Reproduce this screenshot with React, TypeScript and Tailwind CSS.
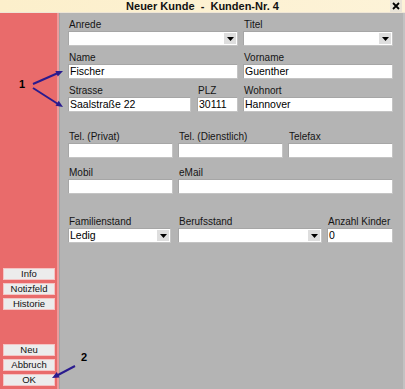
import type { ReactNode } from 'react'

type FieldProps = {
  label: string
  value?: string
  width: string
  select?: boolean
  className?: string
}

function Field({ label, value = '', width, select, className = '' }: FieldProps) {
  return (
    <div className={`${width} ${className} flex flex-col`}>
      <div className="h-[13px] pl-px text-[10px] leading-[13px] text-[#141414] whitespace-nowrap">{label}</div>
      <div className="flex h-[15px] items-stretch border border-[#c4c4c4] border-t-[#a6a6a6] border-l-[#a6a6a6] bg-white">
        <div className="flex-1 overflow-hidden px-px text-[10.5px] leading-[13px] text-black whitespace-nowrap">{value}</div>
        {select && (
          <div className="my-px mr-px flex w-[12px] items-center justify-center bg-[#dedede]">
            <svg width="7" height="4" viewBox="0 0 7 4">
              <polygon points="0,0 7,0 3.5,4" fill="#000" />
            </svg>
          </div>
        )}
      </div>
    </div>
  )
}

function SideButton({ children }: { children: ReactNode }) {
  return (
    <div className="flex h-[12px] w-[52px] items-center justify-center border border-[#f5c4c4] bg-[#ececec] text-[9.5px] leading-[10px] text-[#111]">
      {children}
    </div>
  )
}

export default function App() {
  return (
    <div className="relative flex h-[389px] w-[405px] flex-col overflow-hidden font-['Liberation_Sans',Arial,sans-serif]">
      {/* title bar */}
      <div className="relative flex h-[13px] items-center justify-center border-b border-[#efe6d6] bg-gradient-to-r from-[#fcefcb] to-[#fdf3d8]">
        <span className="text-[11px] font-bold leading-[12px] text-[#111] whitespace-pre">Neuer Kunde  -  Kunden-Nr. 4</span>
        <div className="absolute right-[3px] top-0 flex h-[12px] w-[12px] items-center justify-center bg-[#e9e4d8]">
          <svg width="8" height="8" viewBox="0 0 8 8">
            <path d="M1 1 L7 7 M7 1 L1 7" stroke="#000" strokeWidth="1.8" />
          </svg>
        </div>
      </div>

      <div className="flex flex-1">
        {/* left panel */}
        <aside className="flex w-[59px] flex-col border-r-2 border-[#ec9b9b] bg-[#e96b6b] pl-[3px] pt-[255px]">
          <div className="flex flex-col gap-[3px]">
            <SideButton>Info</SideButton>
            <SideButton>Notizfeld</SideButton>
            <SideButton>Historie</SideButton>
          </div>
          <div className="mt-[34px] flex flex-col gap-[3px]">
            <SideButton>Neu</SideButton>
            <SideButton>Abbruch</SideButton>
            <SideButton>OK</SideButton>
          </div>
        </aside>

        {/* form */}
        <main className="flex flex-1 flex-col border-l border-[#a2a2a2] border-r-2 border-r-[#c2c2c2] bg-[#b4b4b4] pl-[8px] pt-[5px]">
          <div className="flex">
            <Field label="Anrede" width="w-[170px]" select />
            <Field label="Titel" width="w-[150px]" className="ml-[5px]" select />
          </div>
          <div className="mt-[5px] flex">
            <Field label="Name" width="w-[170px]" value="Fischer" />
            <Field label="Vorname" width="w-[150px]" className="ml-[5px]" value="Guenther" />
          </div>
          <div className="mt-[5px] flex">
            <Field label="Strasse" width="w-[123px]" value="Saalstraße 22" />
            <Field label="PLZ" width="w-[41px]" className="ml-[6px]" value="30111" />
            <Field label="Wohnort" width="w-[150px]" className="ml-[5px]" value="Hannover" />
          </div>
          <div className="mt-[18px] flex">
            <Field label="Tel. (Privat)" width="w-[105px]" />
            <Field label="Tel. (Dienstlich)" width="w-[105px]" className="ml-[5px]" />
            <Field label="Telefax" width="w-[105px]" className="ml-[5px]" />
          </div>
          <div className="mt-[8px] flex">
            <Field label="Mobil" width="w-[105px]" />
            <Field label="eMail" width="w-[215px]" className="ml-[5px]" />
          </div>
          <div className="mt-[21px] flex">
            <Field label="Familienstand" width="w-[103px]" value="Ledig" select />
            <Field label="Berufsstand" width="w-[144px]" className="ml-[7px]" select />
            <Field label="Anzahl Kinder" width="w-[66px]" className="ml-[5px]" value="0" />
          </div>
        </main>
      </div>

      {/* annotations */}
      <span className="absolute left-[19px] top-[78px] text-[11px] font-bold leading-[12px] text-black">1</span>
      <span className="absolute left-[81px] top-[351px] text-[11px] font-bold leading-[12px] text-black">2</span>
      <svg className="pointer-events-none absolute left-0 top-0" width="405" height="389" viewBox="0 0 405 389">
        <g stroke="#2a1b8e" strokeWidth="2" fill="none">
          <line x1="33" y1="84" x2="58" y2="73" />
          <line x1="33" y1="88" x2="58" y2="104" />
          <line x1="75" y1="366" x2="57" y2="375.5" />
        </g>
        <g fill="#2a1b8e">
          <polygon points="63,71 57.8,76.5 55.4,71" />
          <polygon points="63,107 55.5,105.8 58.7,100.8" />
          <polygon points="52,378 59.6,377.5 56.8,372.1" />
        </g>
      </svg>
    </div>
  )
}
